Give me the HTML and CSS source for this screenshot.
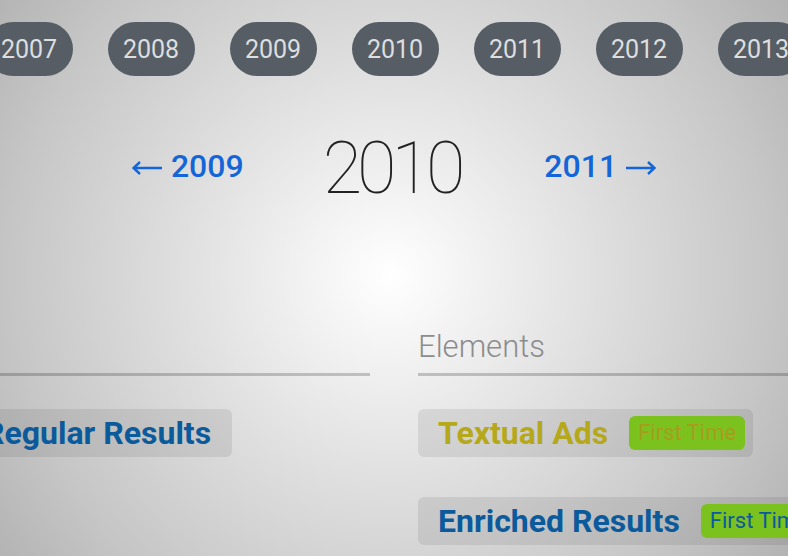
FILE: index.html
```html
<!DOCTYPE html>
<html lang="en">
<head>
  <meta charset="UTF-8" />
  <meta name="viewport" content="width=device-width, initial-scale=1.0" />
  <title>Timeline 2010</title>
  <link rel="stylesheet" href="styles.css">
</head>
<body>
  <div class="page">
    <!-- Year pills -->
    <nav class="years">
      <a class="year" href="#">2007</a>
      <a class="year" href="#">2008</a>
      <a class="year" href="#">2009</a>
      <a class="year" href="#">2010</a>
      <a class="year" href="#">2011</a>
      <a class="year" href="#">2012</a>
      <a class="year" href="#">2013</a>
    </nav>

    <header class="current">
      <a class="step" href="#">
        <svg class="arrow" width="30" height="14" viewBox="0 0 30 14"><path d="M1 7H30M8 1L1.5 7L8 13" fill="none" stroke="currentColor" stroke-width="2.4"/></svg>
        2009
      </a>
      <h1>2010</h1>
      <a class="step" href="#">
        2011
        <svg class="arrow" width="30" height="14" viewBox="0 0 30 14"><path d="M0 7H29M22 1L28.5 7L22 13" fill="none" stroke="currentColor" stroke-width="2.4"/></svg>
      </a>
    </header>

    <section class="columns">
      <div class="col">
        <h2>&nbsp;</h2>
        <div class="cards">
          <div class="card"><span class="title blue">Regular Results</span></div>
        </div>
      </div>
      <div class="col">
        <h2>Elements</h2>
        <div class="cards">
          <div class="card">
            <span class="title olive">Textual Ads</span>
            <span class="badge olive-text">First Time</span>
          </div>
          <div class="card">
            <span class="title blue">Enriched Results</span>
            <span class="badge blue-text">First Time</span>
          </div>
        </div>
      </div>
    </section>
  </div>
</body>
</html>
```

FILE: styles.css
```css
/* Reset */
* {
  margin: 0;
  padding: 0;
  box-sizing: border-box;
}
html, body {
  height: 100%;
}
body {
  font-family: Roboto, "Liberation Sans", sans-serif;
  color: #222;
  overflow: hidden;
  background: radial-gradient(circle at 390px 275px, #fff 0, #e2e2e2 190px, #c6c6c6 380px, #a9a9a9 540px);
}
.page {
  width: 788px;
  overflow: hidden;
}
a {
  text-decoration: none;
}

/* Year pills */
.years {
  display: flex;
  justify-content: center;
  gap: 35px;
  padding-top: 22px;
  padding-left: 2px;
}
.year {
  flex: none;
  width: 87px;
  height: 54px;
  line-height: 56px;
  text-align: center;
  border-radius: 27px;
  background: #565d64;
  color: #dedede;
  font-size: 25px;
}

/* Current year */
.current {
  display: flex;
  justify-content: center;
  align-items: center;
  gap: 79px;
  margin-top: 48px;
}
.current h1 {
  font-size: 72px;
  font-weight: 100;
  letter-spacing: -5px;
  padding-right: 5px;
  line-height: 90px;
  color: #222;
}
.step {
  display: flex;
  align-items: center;
  gap: 9px;
  font-size: 32px;
  font-weight: 500;
  color: #1466d8;
  padding-bottom: 6px;
}
.arrow {
  display: block;
  margin-top: 3px;
}

/* Columns */
.columns {
  display: grid;
  grid-template-columns: 401px 401px;
  gap: 48px;
  justify-content: center;
  margin-top: 115px;
}
.col h2 {
  font-size: 31px;
  font-weight: 300;
  color: #8c8c8c;
  line-height: 36px;
  padding-bottom: 8px;
  border-bottom: 3px solid rgba(0, 0, 0, 0.2);
}
.col:first-child .cards {
  margin-left: -5px;
}
.cards {
  display: flex;
  flex-direction: column;
  align-items: flex-start;
  gap: 40px;
  margin-top: 33px;
}
.card {
  display: inline-flex;
  align-items: center;
  height: 48px;
  padding: 0 8px 0 20px;
  border-radius: 6px;
  background: rgba(0, 0, 0, 0.08);
  white-space: nowrap;
}
.title {
  font-size: 32px;
  font-weight: 700;
  padding-right: 13px;
}
.blue {
  color: #0a5a9c;
}
.olive {
  color: #b5a81a;
}
.badge {
  margin-left: 8px;
  height: 34px;
  line-height: 34px;
  padding: 0 9px;
  border-radius: 6px;
  background: #7cc21f;
  font-size: 22px;
}
.olive-text {
  color: #a89c1e;
}
.blue-text {
  color: #0a5a9c;
}
```
